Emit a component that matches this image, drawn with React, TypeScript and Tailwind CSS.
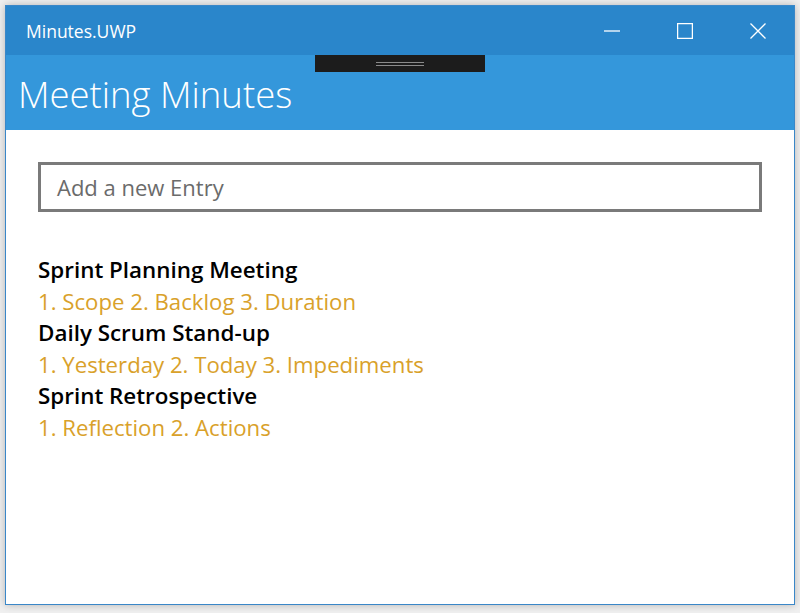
import React from "react";

const items = [
  { title: "Sprint Planning Meeting", body: "1. Scope 2. Backlog 3. Duration" },
  { title: "Daily Scrum Stand-up", body: "1. Yesterday 2. Today 3. Impediments" },
  { title: "Sprint Retrospective", body: "1. Reflection 2. Actions" },
];

export default function App() {
  return (
    <div
      className="w-[800px] h-[613px] bg-[#f0f0f0] pt-[5px] pl-[5px] overflow-hidden"
      style={{ fontFamily: '"Open Sans", "Noto Sans", sans-serif' }}
    >
      <div className="relative w-[790px] h-[600px] border border-[#3a87c8] bg-white flex flex-col shadow-[0_0_8px_rgba(0,0,0,0.25)]">
        {/* title bar */}
        <div className="h-[49px] bg-[#2a86cb] flex items-center text-white">
          <div className="pl-[20px] text-[17.5px] leading-none pt-[2px]">Minutes.UWP</div>
          <div className="ml-auto flex items-center h-full">
            <div className="w-[73px] h-full flex items-center justify-center">
              <svg width="16" height="16" viewBox="0 0 16 16">
                <line x1="0" y1="8" x2="16" y2="8" stroke="white" strokeWidth="1.3" />
              </svg>
            </div>
            <div className="w-[73px] h-full flex items-center justify-center">
              <svg width="16" height="16" viewBox="0 0 16 16">
                <rect x="0.6" y="0.6" width="14.8" height="14.8" fill="none" stroke="white" strokeWidth="1.3" />
              </svg>
            </div>
            <div className="w-[73px] h-full flex items-center justify-center">
              <svg width="16" height="16" viewBox="0 0 16 16">
                <path d="M0.5 0.5 L15.5 15.5 M15.5 0.5 L0.5 15.5" stroke="white" strokeWidth="1.3" />
              </svg>
            </div>
          </div>
        </div>
        {/* header */}
        <div className="h-[75px] bg-[#3497db] flex items-center pl-[12px]">
          <div className="text-white text-[36.5px] font-light leading-none pt-[4px]">Meeting Minutes</div>
        </div>
        {/* gripper */}
        <div className="absolute left-[309px] top-[49px] w-[170px] h-[17px] bg-[#1c1c1c] flex flex-col items-center justify-center gap-[2px]">
          <div className="w-[48px] h-[1px] bg-[#8a8a8a]" />
          <div className="w-[48px] h-[1px] bg-[#8a8a8a]" />
        </div>
        {/* content */}
        <div className="px-[32px] pt-[32px] flex flex-col">
          <div className="h-[50px] border-[3px] border-[#7a7a7a] flex items-center pl-[16px]">
            <span className="text-[22px] text-[#6b6b6b] leading-none pb-[1px]">Add a new Entry</span>
          </div>
          <div className="mt-[42px] flex flex-col">
            {items.map((it) => (
              <React.Fragment key={it.title}>
                <div className="text-[22.4px] font-semibold text-black leading-[31.6px]">{it.title}</div>
                <div className="text-[22.2px] text-[#d9a12a] leading-[31.6px]">{it.body}</div>
              </React.Fragment>
            ))}
          </div>
        </div>
      </div>
    </div>
  );
}
